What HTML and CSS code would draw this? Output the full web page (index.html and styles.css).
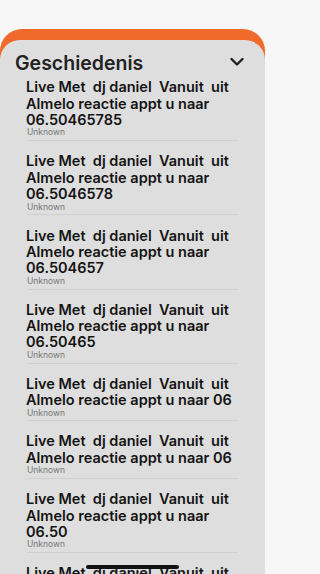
FILE: index.html
```html
<!DOCTYPE html>
<html lang="nl">
<head>
<meta charset="utf-8">
<meta name="viewport" content="width=device-width, initial-scale=1">
<title>Geschiedenis</title>
<link rel="stylesheet" href="styles.css">
</head>
<body>
<div class="screen">
  <div class="status"></div>
  <div class="backsheet">
    <section class="sheet">
      <header class="head">
        <h1 class="head-title">Geschiedenis</h1>
        <svg class="chevron" width="16" height="10" viewBox="0 0 16 10"><path d="M2.5 2 L8 7.5 L13.5 2" fill="none" stroke="#1f1f1f" stroke-width="2.4" stroke-linecap="round" stroke-linejoin="round"/></svg>
      </header>
      <ul class="list">
        <li class="item"><p class="item-title">Live Met  dj daniel  Vanuit  uit<br>Almelo reactie appt u naar<br>06.50465785</p><p class="item-sub">Unknown</p></li>
        <li class="item"><p class="item-title">Live Met  dj daniel  Vanuit  uit<br>Almelo reactie appt u naar<br>06.5046578</p><p class="item-sub">Unknown</p></li>
        <li class="item"><p class="item-title">Live Met  dj daniel  Vanuit  uit<br>Almelo reactie appt u naar<br>06.504657</p><p class="item-sub">Unknown</p></li>
        <li class="item"><p class="item-title">Live Met  dj daniel  Vanuit  uit<br>Almelo reactie appt u naar<br>06.50465</p><p class="item-sub">Unknown</p></li>
        <li class="item"><p class="item-title">Live Met  dj daniel  Vanuit  uit<br>Almelo reactie appt u naar 06</p><p class="item-sub">Unknown</p></li>
        <li class="item"><p class="item-title">Live Met  dj daniel  Vanuit  uit<br>Almelo reactie appt u naar 06</p><p class="item-sub">Unknown</p></li>
        <li class="item"><p class="item-title">Live Met  dj daniel  Vanuit  uit<br>Almelo reactie appt u naar<br>06.50</p><p class="item-sub">Unknown</p></li>
        <li class="item"><p class="item-title">Live Met  dj daniel  Vanuit  uit<br>Almelo reactie appt u naar<br>06.5</p><p class="item-sub">Unknown</p></li>
      </ul>
    </section>
  </div>
  <div class="home-indicator"></div>
</div>
</body>
</html>
```
FILE: styles.css
```css
* { box-sizing: border-box; }
html, body { margin: 0; padding: 0; }
html { background: #f7f7f7; }
body {
  width: 265px;
  height: 574px;
  overflow: hidden;
  background: #f7f7f7;
  font-family: "Inter", "Liberation Sans", sans-serif;
}
.screen {
  position: relative;
  width: 265px;
  height: 574px;
  overflow: hidden;
  display: flex;
  flex-direction: column;
}
.status { height: 29px; flex: none; }
.backsheet {
  flex: 1;
  min-height: 0;
  background: #f06b2b;
  border-radius: 22px 22px 0 0;
  padding-top: 11px;
  display: flex;
  flex-direction: column;
}
.sheet {
  flex: 1;
  min-height: 0;
  background: #dedede;
  border-radius: 20px 20px 0 0;
  overflow: hidden;
}
.head {
  display: flex;
  align-items: flex-start;
  justify-content: space-between;
  padding: 12px 20px 0 15px;
  height: 34px;
}
.head-title {
  margin: 0;
  font-size: 19.5px;
  line-height: 22px;
  font-weight: 600;
  color: #222;
}
.chevron { display: block; margin-top: 4.75px; flex: none; }
.list {
  list-style: none;
  margin: 0;
  padding: 0 27px;
}
.item {
  padding: 12.1px 0 2.9px;
  border-bottom: 1px solid #d0d0d0;
}
.item:first-child { padding-top: 5.4px; }
.item-title {
  margin: 0 0 0 -1px;
  white-space: pre-wrap;
  font-size: 14.5px;
  line-height: 16.3px;
  font-weight: 600;
  color: #141414;
}
.item-sub {
  margin: -0.8px 0 0;
  font-size: 8.5px;
  line-height: 10px;
  color: #767676;
}
.home-indicator {
  position: absolute;
  left: 86px;
  top: 565px;
  width: 93px;
  height: 4px;
  border-radius: 2px;
  background: #111;
}
```
